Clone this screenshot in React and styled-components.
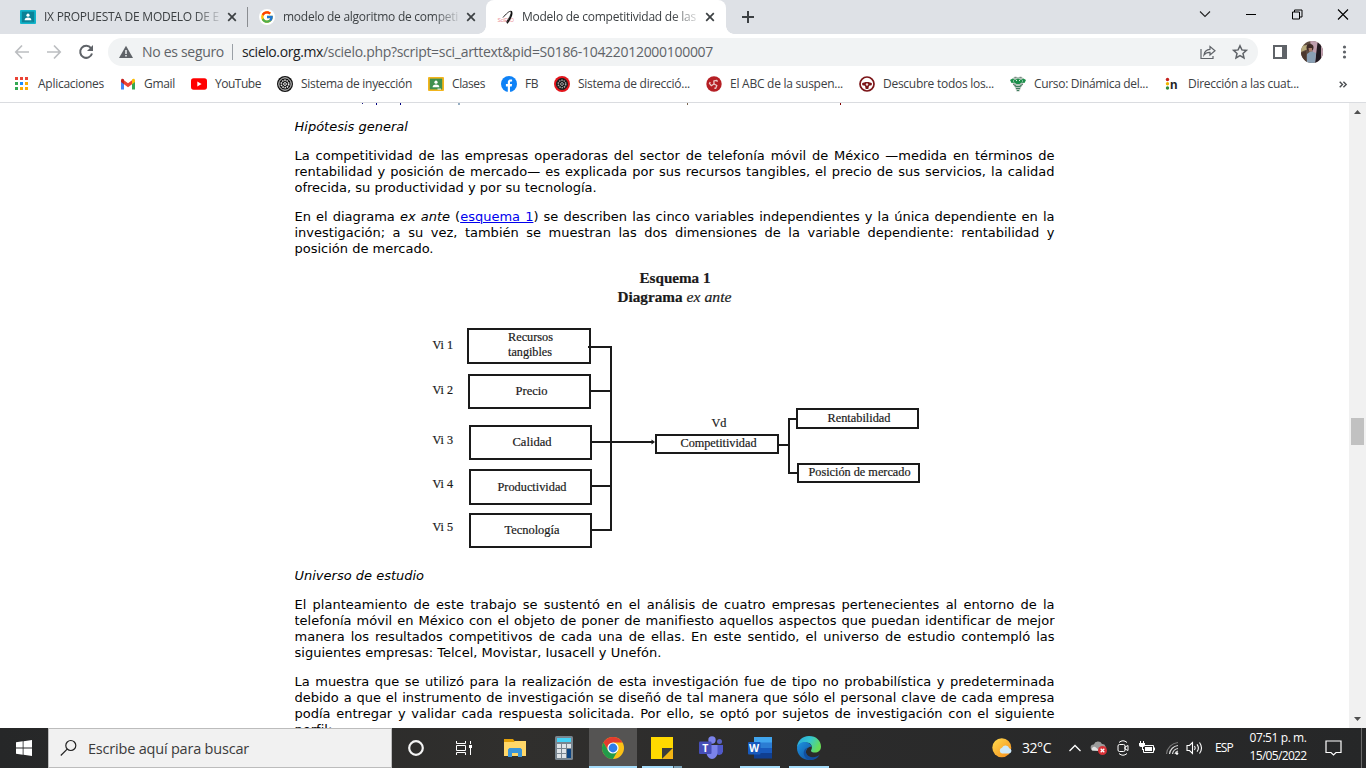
import React, { useLayoutEffect, useRef, useState } from "react";
import styled, { createGlobalStyle, css } from "styled-components";
import { FcGoogle } from "react-icons/fc";

const GlobalStyle = createGlobalStyle`
  *, *::before, *::after { box-sizing: border-box; }
  html, body { margin: 0; padding: 0; }
  body { width: 1366px; height: 768px; overflow: hidden; background: #fff; }
  svg { display: block; flex: none; overflow: visible; }
`;

const ui = `"Open Sans", "Noto Sans", "Liberation Sans", sans-serif`;

const Screen = styled.div`
  display: flex;
  flex-direction: column;
  width: 1366px;
  height: 768px;
  overflow: hidden;
  font-family: ${ui};
`;

/* ---------- text that keeps a set width ---------- */

const LabelBox = styled.span`
  display: block;
  flex: none;
  width: ${(p) => p.$w}px;
  white-space: nowrap;
  font-size: ${(p) => p.$size || 12}px;
  color: ${(p) => p.$color || "#3c4043"};
  line-height: ${(p) => p.$lh || 16}px;
`;

function Label({ w, size, color, lh, children }) {
  const ref = useRef(null);
  const [spacing, setSpacing] = useState(0);
  useLayoutEffect(() => {
    const natural = ref.current.getBoundingClientRect().width;
    setSpacing((w - natural) / children.length);
  }, [w, children]);
  return (
    <LabelBox $w={w} $size={size} $color={color} $lh={lh}>
      <span ref={ref} style={{ letterSpacing: `${spacing}px` }}>
        {children}
      </span>
    </LabelBox>
  );
}

/* ---------- tab strip ---------- */

const TabStrip = styled.header`
  display: flex;
  flex: none;
  height: 34px;
  padding-left: 8px;
  background: #dee1e6;
`;

const TabItem = styled.div`
  position: relative;
  display: flex;
  align-items: center;
  width: ${(p) => (p.$active ? 240 : 239)}px;
  height: 34px;
  padding-left: 12px;
  ${(p) =>
    p.$active &&
    css`
      background: #fff;
      border-radius: 8px 8px 0 0;
      &::before,
      &::after {
        content: "";
        position: absolute;
        bottom: 0;
        width: 8px;
        height: 8px;
      }
      &::before {
        left: -8px;
        background: radial-gradient(circle at 0 0, transparent 7.5px, #fff 8px);
      }
      &::after {
        right: -8px;
        background: radial-gradient(circle at 100% 0, transparent 7.5px, #fff 8px);
      }
    `}
  ${(p) =>
    p.$divided &&
    css`
      &::after {
        content: "";
        position: absolute;
        right: -1px;
        top: 7px;
        width: 1px;
        height: 20px;
        background: #8a8d91;
      }
    `}
`;

const TabTitle = styled.div`
  width: 176px;
  margin: 0 7px 0 8px;
  overflow: hidden;
  mask-image: linear-gradient(to right, #000 150px, transparent 180px);
`;

const NewTab = styled.div`
  display: flex;
  align-items: center;
  margin-left: 16px;
`;

const WindowControls = styled.div`
  display: flex;
  gap: 35px;
  height: 28px;
  align-items: center;
  margin-left: auto;
  padding-right: 17px;
`;

/* ---------- toolbar ---------- */

const Toolbar = styled.div`
  display: flex;
  flex: none;
  align-items: center;
  height: 34px;
  padding: 2px 0 0 14px;
`;

const NavButtons = styled.div`
  display: flex;
  gap: 16px;
  width: 94px;
`;

const Omnibox = styled.div`
  display: flex;
  align-items: center;
  width: 1150px;
  height: 28px;
  padding: 0 10px 0 11px;
  border-radius: 14px;
  background: #f1f3f4;
`;

const Separator = styled.i`
  width: 1px;
  height: 16px;
  margin: 0 9px 0 8px;
  background: #9aa0a6;
`;

const SecurityChip = styled.div`
  display: flex;
  align-items: center;
  gap: 9px;
`;

const OmniActions = styled.div`
  display: flex;
  gap: 16px;
  margin-left: auto;
`;

const ToolbarEnd = styled.div`
  display: flex;
  align-items: center;
  margin-left: 15px;
  gap: 14px;
`;

/* ---------- bookmarks ---------- */

const Bookmarks = styled.nav`
  display: flex;
  flex: none;
  align-items: center;
  gap: 16px;
  height: 35px;
  padding: 0 19px 2px 14px;
  border-bottom: 1px solid #dadce0;
`;

const Bookmark = styled.div`
  display: flex;
  align-items: center;
  gap: 8px;
`;

const More = styled.div`
  margin-left: auto;
`;

/* ---------- page ---------- */

const Page = styled.main`
  display: flex;
  flex: none;
  height: 625px;
  overflow: hidden;
  background: #fff;
`;

const Article = styled.article`
  width: 760px;
  height: 625px;
  overflow: hidden;
  margin: 0 auto 0 294.5px;
  font: 13px/16px "DejaVu Sans", sans-serif;
  font-variant-ligatures: none;
  color: #000;
`;

const Paragraph = styled.p`
  margin: 0 0 13px;
  a { color: #0000ee; }
`;

const Line = styled.span`
  display: block;
  height: 16px;
  text-align: justify;
  text-align-last: ${(p) => (p.$last ? "left" : "justify")};
  white-space: ${(p) => (p.$last ? "nowrap" : "normal")};
`;

const Scrollbar = styled.div`
  display: flex;
  flex-direction: column;
  align-items: center;
  width: 17px;
  height: 625px;
  background: #f1f1f1;
`;

const Thumb = styled.div`
  width: 13px;
  height: 27px;
  margin: 298px 0 auto;
  background: #c1c1c1;
`;

const ScrollArrow = styled.svg`
  margin: ${(p) => (p.$down ? "4px 0 7px" : "7px 0 6px")};
  width: 7px;
  height: 4px;
`;

/* ---------- taskbar ---------- */

const Taskbar = styled.footer`
  display: flex;
  flex: none;
  height: 40px;
  background: linear-gradient(to right, #262728, #302f2d 38%, #2b2b2b 60%, #262728);
`;

const StartButton = styled.div`
  display: flex;
  align-items: center;
  justify-content: center;
  width: 48px;
`;

const SearchBox = styled.div`
  display: flex;
  align-items: center;
  gap: 11px;
  width: 344px;
  padding: 1px 0 0 11px;
  border: 1px solid #bcbcbc;
  background: #f1f1f1;
`;

const AppButton = styled.div`
  display: flex;
  position: relative;
  align-items: center;
  justify-content: center;
  width: 48px;
  height: 40px;
  margin-right: ${(p) => p.$after ?? 1}px;
  background: ${(p) => (p.$active ? "#555453" : "transparent")};
  ${(p) =>
    p.$line &&
    css`
      &::after {
        content: "";
        position: absolute;
        left: ${p.$active ? 0 : 4}px;
        right: ${p.$active ? 0 : 4}px;
        bottom: 0;
        height: 2px;
        background: ${p.$line === "stack"
          ? "linear-gradient(to right, #a5dcfa 31px, #3e4f59 31px, #3e4f59 32px, #799fb4 32px)"
          : "#a5dcfa"};
      }
    `}
`;

const Tray = styled.div`
  display: flex;
  align-items: center;
  width: 374px;
  margin-left: auto;
`;

const TrayItem = styled.div`
  display: flex;
  align-items: center;
  justify-content: center;
  flex: none;
  width: ${(p) => p.$w}px;
  margin-right: ${(p) => p.$gap}px;
`;

const Clock = styled.div`
  display: flex;
  flex-direction: column;
  align-items: center;
  gap: 2px;
  width: 58px;
  margin: 0 18px 2px 0;
`;

const DesktopEdge = styled.i`
  width: 1px;
  height: 40px;
  background: #6a6a6a;
`;

/* ---------- icons ---------- */

const Close = () => (
  <svg width="10" height="10" viewBox="0 0 10 10">
    <path d="M1.2 1.2l7.6 7.6M8.8 1.2L1.2 8.8" stroke="#3c4043" strokeWidth="1.7" />
  </svg>
);

const Classroom = ({ frame, board, line }) => (
  <svg width="16" height="16" viewBox="0 0 16 16">
    <rect x="0" y="1" width="16" height="14" rx="1" fill={frame} />
    <rect x="1.8" y="2.6" width="12.4" height="10.8" fill={board} />
    <circle cx="8" cy="6.2" r="1.6" fill="#fff" />
    <path d="M4.6 11.2c0-1.900 1.800-2.600 3.400-2.600s3.400.7 3.400 2.600z" fill="#fff" />
    <rect x="9.500" y="12.600" width="3.500" height="1" fill={line} />
  </svg>
);

const GoogleFav = () => (
  <svg width="16" height="16" viewBox="0 0 16 16">
    <circle cx="8" cy="8" r="8" fill="#fff" />
    <FcGoogle x="1" y="1" size={14} />
  </svg>
);

const ScieloFav = () => (
  <svg width="16" height="16" viewBox="0 0 16 16">
    <text x="-0.500" y="13" fontSize="5" fill="#ea8d96" textLength="16.500" fontFamily="Liberation Sans">SciELO</text>
    <path d="M5 8.500C8 5 11.300 1.800 12.900 2.300c1.400.7-.8 5.700-4.300 10.400" fill="none" stroke="#222" strokeWidth="1" />
    <path d="M13 2.200c1.600 1.600.2 6-4 12" fill="none" stroke="#111" strokeWidth="1.600" />
  </svg>
);

const Apps = () => {
  const c = ["#ea4335", "#ea4335", "#ea4335", "#34a853", "#1a8cff", "#fbab05", "#34a853", "#fbab05", "#fbab05"];
  return (
    <svg width="16" height="16" viewBox="0 0 16 16">
      {c.map((f, i) => (
        <rect key={i} x={1 + (i % 3) * 5} y={1 + Math.floor(i / 3) * 5} width="3" height="3" fill={f} />
      ))}
    </svg>
  );
};

const Gmail = () => (
  <svg width="16" height="16" viewBox="0 0 16 16">
    <path d="M1 4v9.500h3V7z" fill="#4285f4" />
    <path d="M15 4v9.500h-3V7z" fill="#34a853" />
    <path d="M4 4.300l4 3 4-3v4L8 11.300 4 8.300z" fill="#ea4335" />
    <path d="M1 4.500C1 2.500 2.800 2.400 4 3.500v4.800L1 6z" fill="#c5221f" />
    <path d="M15 4.500c0-2-1.800-2.100-3-1v4.800L15 6z" fill="#fbbc04" />
  </svg>
);

const YouTube = () => (
  <svg width="16" height="16" viewBox="0 0 16 16">
    <rect y="2.300" width="16" height="11.400" rx="2.600" fill="#f00" />
    <path d="M6.300 5.500v5l4.300-2.500z" fill="#fff" />
  </svg>
);

const Wheel = ({ rim, ring, face, spoke }) => (
  <svg width="16" height="16" viewBox="0 0 16 16">
    <circle cx="8" cy="8" r="8" fill={rim} />
    <circle cx="8" cy="8" r={ring} fill="#111" stroke={face} strokeWidth="1" />
    <circle cx="8" cy="8" r="3.700" fill="none" stroke={spoke} strokeWidth="1.600" strokeDasharray="1.500 .82" />
    <circle cx="8" cy="8" r="1.400" fill="none" stroke={spoke} strokeWidth="1" />
  </svg>
);

const Facebook = () => (
  <svg width="16" height="16" viewBox="0 0 16 16">
    <circle cx="8" cy="8" r="8" fill="#0f82f6" />
    <path d="M6.800 16v-5.600H4.900V8h1.900V6.400c0-2 1.100-3 2.800-3 .6 0 1.200.1 1.500.2v2h-.9c-.9 0-1.200.5-1.200 1.100V8h2.100l-.4 2.400H9V16z" fill="#fff" />
  </svg>
);

const Triskelion = () => (
  <svg width="16" height="16" viewBox="0 0 16 16">
    <circle cx="8" cy="8" r="7.700" fill="#b51f24" />
    <g fill="none" stroke="#eccaca" strokeWidth="1.300" strokeLinejoin="round">
      {[20, 140, 260].map((a) => (
        <path key={a} d="M8 8L6.800 5l2.600-1.400 1 1.100" transform={`rotate(${a} 8 8)`} />
      ))}
    </g>
  </svg>
);

const Steering = () => (
  <svg width="16" height="16" viewBox="0 0 16 16">
    <circle cx="8" cy="8" r="7" fill="#fff" stroke="#7b1518" strokeWidth="1.700" />
    <path d="M3 7.500c2-2 8-2 10 0l-.4 1.700-2.600.5L9.300 13H6.700L6 9.700l-2.600-.5z" fill="#7b1518" />
    <circle cx="8" cy="8.500" r="1.200" fill="#f2dede" />
  </svg>
);

const Crest = () => (
  <svg width="16" height="16" viewBox="0 0 16 16">
    <path d="M2 3.500L4 1h8l2 2.500-1 5-2 3-1.500 4h-3L5 11.500l-2-3z" fill="#b5c4bb" />
    <path d="M0 4l2.500-1.500L5 4l3-1.500L11 4l2.500-1.500L16 4l-1.500 3-3-.5L9.500 8h-3L4.500 6.500l-3 .5z" fill="#1c8f4a" />
    <path d="M6 4.500h1M9 4.500h1M3 5h1M12 5h1" stroke="#dfeee5" strokeWidth="1" />
    <path d="M4.500 9L6 10.500h4L11.500 9M6 12.500h4M7 14.500h2" stroke="#3f7d5e" strokeWidth="1.100" fill="none" />
    <path d="M4.500 1.300h2M9.500 1.300h2M3 8.500h1.500M11.500 8.500H13" stroke="#6b7e75" strokeWidth="1" />
  </svg>
);

const DotN = () => (
  <svg width="16" height="16" viewBox="0 0 16 16">
    <circle cx="3.500" cy="3.500" r="1.700" fill="#c5221f" />
    <circle cx="3.500" cy="7.800" r="1.700" fill="#f0b400" />
    <circle cx="3.500" cy="12" r="1.700" fill="#2e8b3d" />
    <text x="6" y="13.300" fontSize="13" fontWeight="700" fontFamily="Liberation Sans" fill="#222" textLength="7.500" lengthAdjust="spacingAndGlyphs">n</text>
  </svg>
);

const Avatar = () => (
  <svg width="22" height="22" viewBox="0 0 22 22">
    <clipPath id="avatar"><circle cx="11" cy="11" r="11" /></clipPath>
    <g clipPath="url(#avatar)">
      <rect width="22" height="22" fill="#5d4a3e" />
      <path d="M9 0h13v22h-8z" fill="#bf9fae" />
      <path d="M0 5l6-1 1 4-7 3z" fill="#b7aa7c" />
      <path d="M16.500 2L20 0v22h-6z" fill="#211920" />
      <path d="M5 22l1-9 4-3 5 2-1 10z" fill="#8aa0b4" />
      <circle cx="9" cy="6.500" r="3.500" fill="#3e2a26" />
      <path d="M7.500 7h3.500v3.500H8z" fill="#a97f6e" />
      <path d="M0 12l5-2 1 12H0z" fill="#4c382d" />
    </g>
  </svg>
);

const ChromeIcon = () => (
  <svg width="24" height="24" viewBox="0 0 24 24">
    <circle cx="12" cy="12" r="11" fill="#fbc116" />
    <path d="M2.470 6.500A11 11 0 0 1 21.530 6.500H12L7.240 14.750z" fill="#e33b2e" />
    <path d="M2.470 6.500A11 11 0 0 0 12 23l4.760-8.250H7.240z" fill="#229b4a" />
    <circle cx="12" cy="12" r="5.600" fill="#fff" />
    <circle cx="12" cy="12" r="4.400" fill="#2f7de9" />
  </svg>
);

const Explorer = () => (
  <svg width="22" height="20" viewBox="0 0 22 20">
    <path d="M0 1h9l1.500 2H22v4H0z" fill="#e3a008" />
    <path d="M0 4h10l1-1h11v15H0z" fill="#ffd768" />
    <path d="M4 19v-7.500l1.500-1.500h11l1.500 1.500V19h-4v-4H8v4z" fill="#3a95d8" />
  </svg>
);

const Calculator = () => (
  <svg width="18" height="24" viewBox="0 0 18 24">
    <rect width="18" height="24" rx="1.500" fill="#78858f" />
    <rect x="2" y="2" width="14" height="4" fill="#45d2f6" />
    {[0, 1, 2].map((r) =>
      [0, 1, 2].map((c) => (
        <rect key={`${r}${c}`} x={2 + c * 5} y={8 + r * 5} width="4" height="4" fill={c === 2 && r > 0 ? "#0d4582" : "#dfe4e8"} />
      ))
    )}
    <rect x="12" y="16" width="4" height="3" fill="#0d4582" />
  </svg>
);

const StickyNotes = () => (
  <svg width="22" height="22" viewBox="0 0 22 22">
    <path d="M0 0h22v22H0z" fill="#ffd900" />
    <path d="M11 22V11h11z" fill="#3c3c3c" />
    <path d="M22 11.500V22H11.500z" fill="#f3b414" />
  </svg>
);

const Teams = () => (
  <svg width="24" height="24" viewBox="0 0 24 24">
    <circle cx="20.500" cy="5.500" r="2.500" fill="#5a62c3" />
    <path d="M17 9h7v6.500a4 4 0 0 1-7 2z" fill="#5059c9" />
    <circle cx="13" cy="4" r="3.700" fill="#7b83eb" />
    <path d="M7.500 9h11v7.500a5.500 6.500 0 0 1-11 0z" fill="#7b83eb" />
    <rect x="0" y="5.500" width="12.500" height="12.500" rx="1" fill="#464eb8" />
    <text x="6.200" y="15.600" textAnchor="middle" fontSize="10.500" fontWeight="700" fontFamily="Open Sans" fill="#fff">T</text>
  </svg>
);

const Word = () => (
  <svg width="24" height="22" viewBox="0 0 24 22">
    <rect x="6" width="18" height="6" fill="#41a5ee" />
    <rect x="6" y="5.500" width="18" height="5.500" fill="#2b7cd3" />
    <rect x="6" y="11" width="18" height="5.500" fill="#185abd" />
    <rect x="6" y="16" width="18" height="5.500" fill="#103f91" />
    <rect y="5" width="12.500" height="12.500" rx="1" fill="#185abd" />
    <text x="6.200" y="15" textAnchor="middle" fontSize="10.500" fontWeight="700" fontFamily="Open Sans" fill="#fff">W</text>
  </svg>
);

const Edge = () => (
  <svg width="24" height="24" viewBox="0 0 24 24">
    <defs>
      <linearGradient id="edgeTop" x1="0" y1="0" x2="1" y2=".4">
        <stop offset="0" stopColor="#2aa5dc" />
        <stop offset=".55" stopColor="#35c7cf" />
        <stop offset="1" stopColor="#66dc58" />
      </linearGradient>
      <linearGradient id="edgeLeft" x1="0" y1="0" x2="1" y2="1">
        <stop offset="0" stopColor="#1d95e0" />
        <stop offset="1" stopColor="#114a9c" />
      </linearGradient>
    </defs>
    <path d="M0 12C0 5 5 0 12 0c7.500 0 12 5 12 10.500 0 4-3 6-6 6-4 0-4.500-1.500-3.500-3C16 10 13.500 6.500 9.500 6.500 4 6.500.5 10 0 12z" fill="url(#edgeTop)" />
    <path d="M0 12c.5-4 4.500-6.500 8.500-6 3.500.4 6 2.800 6.200 5-2.200-1-6 1.500-5.700 5.500.3 3.500 3.300 7 7.500 6.600C8 26 0 20.500 0 12z" fill="url(#edgeLeft)" />
    <path d="M11 11.300c-3.200 2.200-2.700 6.700.5 8.700 4 2.400 8.200 1.200 11.200-1.500-2.700 5.500-8.700 6.500-12 4.700-5.200-2.700-5.500-10 .3-11.900z" fill="#124f9e" />
  </svg>
);

/* ---------- diagram ---------- */

const ink = "#1a1a1a";
const variables = [
  { tag: "Vi 1", tagY: 93, x: 173, y: 73, w: 122, h: 34, join: 91, text: [["Recursos", 213.500, 85, 45], ["tangibles", 213.500, 100, 44]] },
  { tag: "Vi 2", tagY: 138, x: 174, y: 119, w: 121, h: 33, join: 135, text: [["Precio", 221, 139, 32]] },
  { tag: "Vi 3", tagY: 188, x: 175, y: 170, w: 121, h: 33, join: 186, text: [["Calidad", 218, 190, 39]] },
  { tag: "Vi 4", tagY: 232, x: 175, y: 214, w: 121, h: 34, join: 230, text: [["Productividad", 203, 235, 69]] },
  { tag: "Vi 5", tagY: 275, x: 175, y: 258, w: 121, h: 33, join: 274, text: [["Tecnología", 210, 278, 55]] },
];

const DiagramSvg = styled.svg`
  margin: -14px 0 1px 0.5px;
  width: 760px;
  height: 311px;
  font-family: "Liberation Serif", serif;
  font-size: 12.5px;
  fill: ${ink};
  text {
    stroke: ${ink};
    stroke-width: 0.2px;
  }
`;

const Box = ({ x, y, w, h }) => (
  <rect x={x} y={y} width={w} height={h} fill="none" stroke={ink} strokeWidth="2" />
);
const T = ({ x, y, w, ...rest }) => (
  <text x={x - 0.5} y={y} textLength={w} lengthAdjust="spacingAndGlyphs" {...rest} />
);

const Diagram = () => (
  <DiagramSvg viewBox="0 0 760 311">
    <T x="345" y="27" w="71" fontSize="14.500" fontWeight="700">Esquema 1</T>
    <T x="323" y="46" w="65" fontSize="14.500" fontWeight="700">Diagrama</T>
    <T x="392" y="46" w="45" fontSize="14.500" fontStyle="italic">ex ante</T>
    {variables.map((v) => (
      <g key={v.tag}>
        <T x="138" y={v.tagY} w="20.500">{v.tag}</T>
        <Box x={v.x} y={v.y} w={v.w} h={v.h} />
        {v.text.map(([s, x, y, w]) => (
          <T key={s} x={x} y={y} w={w}>{s}</T>
        ))}
        <path d={`M${v.x + v.w - (v.tag === "Vi 1" ? 2 : 0)} ${v.join}H317`} stroke={ink} strokeWidth="2" />
      </g>
    ))}
    <path d="M316 90V275M316 186H358M484 189H494M502 163H494V217H503" fill="none" stroke={ink} strokeWidth="2" />
    <path d="M356.500 183.500l3.500 2.500-3.500 2.500z" />
    <T x="417" y="171" w="15">Vd</T>
    <Box x={361} y={179} w={122} h={18} />
    <T x="386" y="191" w="76">Competitividad</T>
    <Box x={502} y={153} w={121} h={19} />
    <T x="533" y="166" w="63">Rentabilidad</T>
    <Box x={503} y={208} w={121} h={18} />
    <T x="514" y="220" w="102">Posición de mercado</T>
  </DiagramSvg>
);

const Descenders = styled.svg`
  width: 760px;
  height: 2px;
  margin: 0 0 14px 0.5px;
`;

const tabs = [
  { title: "IX PROPUESTA DE MODELO DE EL", w: 181, icon: <Classroom frame="#12b5cb" board="#0b8296" line="#129eaf" />, divided: true },
  { title: "modelo de algoritmo de competi", w: 175, icon: <GoogleFav /> },
  { title: "Modelo de competitividad de las", w: 174, icon: <ScieloFav />, active: true },
];

const bookmarks = [
  ["Aplicaciones", 66, <Apps />],
  ["Gmail", 31, <Gmail />],
  ["YouTube", 46, <YouTube />],
  ["Sistema de inyección", 111, <Wheel rim="#111" ring="6.200" face="#ddd" spoke="#eee" />],
  ["Clases", 33, <Classroom frame="#f2b51d" board="#3f8f4f" line="#fff" />],
  ["FB", 13, <Facebook />],
  ["Sistema de direcció...", 112, <Wheel rim="#e3141b" ring="5.500" face="#222" spoke="#a9a9a9" />],
  ["El ABC de la suspen...", 113, <Triskelion />],
  ["Descubre todos los...", 111, <Steering />],
  ["Curso: Dinámica del...", 114, <Crest />],
  ["Dirección a las cuat...", 111, <DotN />],
];

export default function App() {
  return (
    <Screen>
      <GlobalStyle />
      <TabStrip>
        {tabs.map((t) => (
          <TabItem key={t.title} $active={t.active} $divided={t.divided}>
            {t.icon}
            <TabTitle><Label w={t.w}>{t.title}</Label></TabTitle>
            <Close />
          </TabItem>
        ))}
        <NewTab>
          <svg width="12" height="12" viewBox="0 0 12 12"><path d="M6 0v12M0 6h12" stroke="#3c4043" strokeWidth="2" /></svg>
        </NewTab>
        <WindowControls>
          <svg width="12" height="10" viewBox="0 0 12 10"><path d="M1 2.500L6 7.500l5-5" fill="none" stroke="#222" strokeWidth="1.100" /></svg>
          <svg width="11" height="10" viewBox="0 0 11 10"><path d="M0 5.500h10" stroke="#000" /></svg>
          <svg width="11" height="11" viewBox="0 0 11 11"><path d="M.5 3h7v7h-7zM2.500 3V1h7.500v7H8" fill="none" stroke="#000" /></svg>
          <svg width="11" height="11" viewBox="0 0 11 11"><path d="M0 .5l10 10M10 .5l-10 10" stroke="#000" strokeWidth="1.100" /></svg>
        </WindowControls>
      </TabStrip>

      <Toolbar>
        <NavButtons>
          <svg width="16" height="16" viewBox="0 0 16 16"><path d="M15 8H2M8 1.500L1.800 8 8 14.500" fill="none" stroke="#bcbec1" strokeWidth="1.700" /></svg>
          <svg width="16" height="16" viewBox="0 0 16 16"><path d="M1 8h13M8 1.500L14.200 8 8 14.500" fill="none" stroke="#bcbec1" strokeWidth="1.700" /></svg>
          <svg width="16" height="16" viewBox="0 0 16 16">
            <path d="M13 4.200A6 6 0 1 0 14 9.500" fill="none" stroke="#5f6368" strokeWidth="2" />
            <path d="M15 1v6H9z" fill="#5f6368" />
          </svg>
        </NavButtons>
        <Omnibox>
          <SecurityChip>
            <svg width="14" height="14" viewBox="0 0 14 14">
              <path d="M7 .8L14 13H0z" fill="#5f6368" />
              <path d="M7 5v4M7 10v1.600" stroke="#f1f3f4" strokeWidth="1.500" />
            </svg>
            <Label w={82} size={14} lh={20} color="#5f6368">No es seguro</Label>
          </SecurityChip>
          <Separator />
          <Label w={81} size={14} lh={20} color="#202124">scielo.org.mx</Label>
          <Label w={390} size={14} lh={20} color="#5f6368">/scielo.php?script=sci_arttext&pid=S0186-10422012000100007</Label>
          <OmniActions>
            <svg width="16" height="16" viewBox="0 0 16 16">
              <path d="M1 5v9.500h12V12M4 11c.5-4 2.500-5.500 6-5.700V2.500L15 6.800 10 11V8.300C7.500 8.200 5.500 9 4 11z" fill="none" stroke="#5f6368" strokeWidth="1.200" />
            </svg>
            <svg width="16" height="16" viewBox="0 0 16 16">
              <path d="M8 1.800l1.900 4.100 4.500.5-3.400 3 1 4.500L8 11.600l-4 2.300 1-4.500-3.400-3 4.500-.5z" fill="none" stroke="#5f6368" strokeWidth="1.500" />
            </svg>
          </OmniActions>
        </Omnibox>
        <ToolbarEnd>
          <svg width="14" height="14" viewBox="0 0 14 14">
            <rect x="1" y="1" width="12" height="12" fill="none" stroke="#5f6368" strokeWidth="2" />
            <rect x="9" y="1" width="4" height="12" fill="#5f6368" />
          </svg>
          <Avatar />
          <svg width="16" height="14" viewBox="0 0 16 14" fill="#5f6368">
            <circle cx="7.500" cy="2" r="1.600" /><circle cx="7.500" cy="7" r="1.600" /><circle cx="7.500" cy="12" r="1.600" />
          </svg>
        </ToolbarEnd>
      </Toolbar>

      <Bookmarks>
        {bookmarks.map(([name, w, icon]) => (
          <Bookmark key={name}>{icon}<Label w={w}>{name}</Label></Bookmark>
        ))}
        <More>
          <svg width="8" height="7" viewBox="0 0 8 7"><path d="M.7.7l2.800 2.800L.7 6.300M4.400.7l2.800 2.800-2.800 2.800" fill="none" stroke="#4a4d51" strokeWidth="1.400" /></svg>
        </More>
      </Bookmarks>

      <Page>
        <Article>
          <Descenders viewBox="0 0 760 2">
            <rect x="67" width="1" height="1" fill="#1c1c80" />
            <rect x="81" width="1" height="2" fill="#000080" />
            <rect x="105" width="1" height="2" fill="#000080" />
            <rect x="163.500" width="1" height="2" fill="#2f5f88" />
            <rect x="392" width="1" height="2" fill="#7a6650" />
            <rect x="545" width="1" height="2" fill="#800000" />
          </Descenders>
          <Paragraph><i>Hipótesis general</i></Paragraph>
          <Paragraph>
            <Line>La competitividad de las empresas operadoras del sector de telefonía móvil de México —medida en términos de</Line>
            <Line>rentabilidad y posición de mercado— es explicada por sus recursos tangibles, el precio de sus servicios, la calidad</Line>
            <Line $last>ofrecida, su productividad y por su tecnología.</Line>
          </Paragraph>
          <Paragraph>
            <Line>En el diagrama <i>ex ante</i> (<a href="#e1">esquema 1</a>) se describen las cinco variables independientes y la única dependiente en la</Line>
            <Line>investigación; a su vez, también se muestran las dos dimensiones de la variable dependiente: rentabilidad y</Line>
            <Line $last>posición de mercado.</Line>
          </Paragraph>
          <Diagram />
          <Paragraph><i>Universo de estudio</i></Paragraph>
          <Paragraph>
            <Line>El planteamiento de este trabajo se sustentó en el análisis de cuatro empresas pertenecientes al entorno de la</Line>
            <Line>telefonía móvil en México con el objeto de poner de manifiesto aquellos aspectos que puedan identificar de mejor</Line>
            <Line>manera los resultados competitivos de cada una de ellas. En este sentido, el universo de estudio contempló las</Line>
            <Line $last>siguientes empresas: Telcel, Movistar, Iusacell y Unefón.</Line>
          </Paragraph>
          <Paragraph>
            <Line>La muestra que se utilizó para la realización de esta investigación fue de tipo no probabilística y predeterminada</Line>
            <Line>debido a que el instrumento de investigación se diseñó de tal manera que sólo el personal clave de cada empresa</Line>
            <Line>podía entregar y validar cada respuesta solicitada. Por ello, se optó por sujetos de investigación con el siguiente</Line>
            <Line $last>perfil:</Line>
          </Paragraph>
        </Article>
        <Scrollbar>
          <ScrollArrow viewBox="0 0 7 4"><path d="M0 4L3.500 0 7 4z" fill="#505050" /></ScrollArrow>
          <Thumb />
          <ScrollArrow $down viewBox="0 0 7 4"><path d="M0 0h7L3.500 4z" fill="#505050" /></ScrollArrow>
        </Scrollbar>
      </Page>

      <Taskbar>
        <StartButton>
          <svg width="16" height="16" viewBox="0 0 16 16" fill="#fff">
            <path d="M0 2.200L6.700 1.300v6.300H0zM7.500 1.200L16 0v7.600H7.500zM0 8.400h6.700v6.300L0 13.800zM7.500 8.400H16V16l-8.500-1.200z" />
          </svg>
        </StartButton>
        <SearchBox>
          <svg width="17" height="17" viewBox="0 0 17 17"><circle cx="10.800" cy="5.500" r="5" fill="none" stroke="#222" strokeWidth="1.200" /><path d="M7.200 9.100L.8 15.500" stroke="#222" strokeWidth="1.200" /></svg>
          <Label w={161} size={14.500} lh={20} color="#3b3b3b">Escribe aquí para buscar</Label>
        </SearchBox>
        <AppButton $after={0}>
          <svg width="16" height="16" viewBox="0 0 16 16"><circle cx="8" cy="8" r="6.800" fill="none" stroke="#f4f4f4" strokeWidth="2.200" /></svg>
        </AppButton>
        <AppButton $after={3}>
          <svg width="16" height="16" viewBox="0 0 16 16">
            <path d="M.5 1v2.500h9V1M.5 15v-2.500h9V15M.5 5.500h9v5h-9zM14.500 1v3M14.500 8v7" fill="none" stroke="#fff" />
            <rect x="13" y="5" width="3" height="3" fill="#fff" />
          </svg>
        </AppButton>
        <AppButton><Explorer /></AppButton>
        <AppButton><Calculator /></AppButton>
        <AppButton $active $line="full"><ChromeIcon /></AppButton>
        <AppButton $line="stack"><StickyNotes /></AppButton>
        <AppButton><Teams /></AppButton>
        <AppButton $line="full"><Word /></AppButton>
        <AppButton $line="full"><Edge /></AppButton>
        <Tray>
          <TrayItem $w={21} $gap={9}>
            <svg width="21" height="20" viewBox="0 0 21 20">
              <defs><linearGradient id="sun" x1="0" y1="0" x2="1" y2="1"><stop offset="0" stopColor="#ffdc4f" /><stop offset="1" stopColor="#f58c1c" /></linearGradient></defs>
              <circle cx="9.800" cy="9.800" r="9.500" fill="url(#sun)" />
              <path d="M10 15.500a3 3 0 0 1 0-5.800 4 4 0 0 1 7.300.5 2.700 2.700 0 0 1 0 5.300z" fill="#cde9fb" />
            </svg>
          </TrayItem>
          <TrayItem $w={29} $gap={17}><Label w={29} size={14} lh={20} color="#fff">32°C</Label></TrayItem>
          <TrayItem $w={14} $gap={8}><svg width="14" height="8" viewBox="0 0 14 8"><path d="M1.500 7L7 1.500 12.500 7" fill="none" stroke="#fff" strokeWidth="1.300" /></svg></TrayItem>
          <TrayItem $w={18} $gap={8}>
            <svg width="18" height="14" viewBox="0 0 18 14">
              <path d="M3.500 9.500a3 3 0 0 1 .3-6A4.500 4.500 0 0 1 12 3a3.500 3.500 0 0 1 2 6.500z" fill="#9b9b9b" />
              <path d="M2 9.500c-1-2 .5-4 3-3.800L10 10z" fill="#e2e2e2" />
              <circle cx="12.500" cy="9.500" r="4.500" fill="#d83036" />
              <path d="M10.700 7.700l3.600 3.600M14.300 7.700l-3.600 3.600" stroke="#fff" strokeWidth="1.300" />
            </svg>
          </TrayItem>
          <TrayItem $w={14} $gap={8}>
            <svg width="14" height="16" viewBox="0 0 14 16" fill="none" stroke="#fff">
              <path d="M3 2.500Q7-1 11 2.500M3 13.500q4 3.500 8 0" /><rect x="2" y="4.500" width="7" height="7" rx="1.500" /><path d="M9 7l3-1.500v5L9 9z" />
            </svg>
          </TrayItem>
          <TrayItem $w={18} $gap={9}>
            <svg width="18" height="14" viewBox="0 0 18 14">
              <path d="M6.500 4.500h9v7h-10V8M16.500 6.500v3" fill="none" stroke="#fff" /><rect x="7" y="6" width="7" height="4" fill="#fff" />
              <path d="M2.500 0v2M5.500 0v2" fill="none" stroke="#fff" />
              <path d="M1 2h6v2c0 1.500-1 2-3 2s-3-.5-3-2z" fill="#fff" /><path d="M4.500 6v3" stroke="#fff" />
            </svg>
          </TrayItem>
          <TrayItem $w={14} $gap={6}>
            <svg width="14" height="14" viewBox="0 0 14 14" fill="none">
              <path d="M1.500 13C2 7 7 2 13 1.500" stroke="#777" strokeWidth="1.200" /><path d="M4.500 13c.5-4.500 4-8 8.500-8.500M7.500 13c.4-3 2.500-5 5.500-5.500M10 13c.3-1.500 1.500-2.500 3-3" stroke="#ddd" strokeWidth="1.200" /><circle cx="12" cy="12.500" r="1.300" fill="#fff" />
            </svg>
          </TrayItem>
          <TrayItem $w={19} $gap={11}>
            <svg width="19" height="14" viewBox="0 0 19 14" fill="none" stroke="#fff" strokeWidth="1.100">
              <path d="M2 4.500h2.500L7.500 1.500v11L4.500 9.500H2zM9.500 5q1.500 2 0 4M12 3.300q2.800 3.700 0 7.400M14.500 1.500q4 5.500 0 11" />
            </svg>
          </TrayItem>
          <TrayItem $w={18} $gap={16}><Label w={18} size={12} color="#fff">ESP</Label></TrayItem>
          <Clock>
            <Label w={57} size={12} color="#fff">07:51 p. m.</Label>
            <Label w={57} size={12} color="#fff">15/05/2022</Label>
          </Clock>
          <TrayItem $w={17} $gap={19}>
            <svg width="17" height="16" viewBox="0 0 17 16"><path d="M1 1h15v11.500h-5L8.500 15 6 12.500H1z" fill="none" stroke="#fff" strokeWidth="1.200" /></svg>
          </TrayItem>
          <DesktopEdge />
        </Tray>
      </Taskbar>
    </Screen>
  );
}
